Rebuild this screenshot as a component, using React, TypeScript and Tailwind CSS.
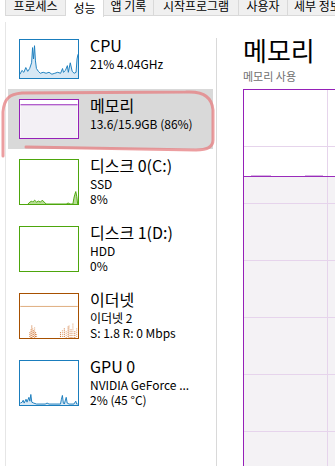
import React from 'react'

const font = { fontFamily: '"Noto Sans CJK KR", "Noto Sans", sans-serif' }

const tabs = [
  { label: '프로세스', w: 'w-[60px]', active: false },
  { label: '성능', w: 'w-[38px]', active: true },
  { label: '앱 기록', w: 'w-[50px]', active: false },
  { label: '시작프로그램', w: 'w-[85px]', active: false },
  { label: '사용자', w: 'w-[49px]', active: false },
  { label: '세부 정보', w: 'w-[60px]', active: false },
]

function CpuGraph() {
  const pts = '0,36 2,32 4,34 6,29 8,33 10,30 12,24 13,8 14,20 15,6 16,22 17,30 19,33 21,35 24,34 27,35 30,34 33,36 36,35 39,34 42,35 44,30 45,34 47,32 49,27 50,34 52,24 54,33 56,35 58,34 59,20 60,15'
  return (
    <svg width="60" height="40" className="block shrink-0 border border-[#1a7dbd] bg-white" viewBox="0 0 60 40" preserveAspectRatio="none">
      <polygon points={`0,40 ${pts} 60,40`} fill="#d7e8f5" />
      <polyline points={pts} fill="none" stroke="#1a7dbd" strokeWidth="1" />
    </svg>
  )
}

function MemGraph() {
  return (
    <svg width="60" height="40" className="block shrink-0 border border-[#9520b8] bg-white" viewBox="0 0 60 40">
      <rect x="0" y="5" width="60" height="35" fill="#f3f0f5" />
      <line x1="0" y1="5" x2="60" y2="5" stroke="#9520b8" strokeWidth="1" />
    </svg>
  )
}

function DiskGraph({ active }: { active: boolean }) {
  const pts = '8,46 10,44 12,43 13,44 15,42 17,44 19,43 21,44 23,42 25,44 27,46 48,46 50,45 52,46 55,46 56,40 57,36 58,33 59,38 60,46'
  return (
    <svg width="60" height="46" className="block shrink-0 border border-[#4da60c] bg-white" viewBox="0 0 60 46">
      {active && (
        <>
          <polygon points={pts} fill="#b7dd96" />
          <polyline points={pts} fill="none" stroke="#4da60c" strokeWidth="1" />
        </>
      )}
    </svg>
  )
}

function EthGraph() {
  const bars = [
    [10, 40], [11, 37], [12, 33], [13, 36], [14, 38], [15, 35], [16, 40], [17, 42],
    [42, 40], [44, 38], [46, 36], [48, 39], [50, 34], [51, 33], [53, 37], [55, 31], [57, 39], [59, 36],
  ]
  return (
    <svg width="60" height="46" className="block shrink-0 border border-[#a75000] bg-white" viewBox="0 0 60 46">
      <line x1="0" y1="13" x2="60" y2="13" stroke="#dca878" strokeWidth="1" />
      {bars.map(([x, y], i) => (
        <line key={i} x1={x} y1={y} x2={x} y2={46} stroke={i % 2 ? '#e09a66' : '#c8641e'} strokeWidth="1" strokeDasharray="1 1" />
      ))}
    </svg>
  )
}

function GpuGraph() {
  const pts = '0,44 2,43 3,41 4,44 6,40 7,43 9,38 10,42 11,35 12,43 14,44 17,45 26,45 28,44 30,45 42,45 43,40 44,36 45,44 46,45 48,38 49,44 51,45 56,45 58,42 59,45 60,45'
  return (
    <svg width="60" height="46" className="block shrink-0 border border-[#1a7dbd] bg-white" viewBox="0 0 60 46">
      <polygon points={`0,46 ${pts} 60,46`} fill="#d7e8f5" />
      <polyline points={pts} fill="none" stroke="#1a7dbd" strokeWidth="1" />
    </svg>
  )
}

type Item = { title: string; lines: string[]; graph: React.ReactNode; selected?: boolean }

const items: Array<Item> = [
  { title: 'CPU', lines: ['21% 4.04GHz'], graph: <CpuGraph /> },
  { title: '메모리', lines: ['13.6/15.9GB (86%)'], graph: <MemGraph />, selected: true },
  { title: '디스크 0(C:)', lines: ['SSD', '8%'], graph: <DiskGraph active /> },
  { title: '디스크 1(D:)', lines: ['HDD', '0%'], graph: <DiskGraph active={false} /> },
  { title: '이더넷', lines: ['이더넷 2', 'S: 1.8 R: 0 Mbps'], graph: <EthGraph /> },
  { title: 'GPU 0', lines: ['NVIDIA GeForce ...', '2% (45 °C)'], graph: <GpuGraph /> },
]

export default function App() {
  return (
    <div className="relative w-[335px] h-[466px] overflow-hidden bg-white text-black" style={font}>
      <div className="ml-[5px] flex h-[16px] bg-[#f0f0f0] border-l border-[#dadada]">
        {tabs.map((t) => (
          <div
            key={t.label}
            className={`${t.w} shrink-0 flex items-end justify-center overflow-hidden whitespace-nowrap text-[12px] leading-none pb-[3px] border-r border-[#d9d9d9] ${t.active ? 'bg-white h-[17px]' : 'border-b'}`}
          >
            {t.label}
          </div>
        ))}
      </div>
      <div className="flex h-[450px]">
        <div className="ml-[5px] mt-[6px] w-[211px] shrink-0 flex flex-col border-l border-[#e6e6e6] pt-[7px]">
          {items.map((it) => (
            <div
              key={it.title}
              className={`ml-[2px] mr-[3px] flex items-start gap-[11px] pl-[11px] py-[10px] ${it.selected ? 'bg-[#d9d9d9]' : ''}`}
            >
              {it.graph}
              <div className="flex flex-col whitespace-nowrap -mt-[4px]">
                <div className="text-[16px] leading-[21px]">{it.title}</div>
                {it.lines.map((l) => (
                  <div key={l} className="text-[12px] leading-[15px]">{l}</div>
                ))}
              </div>
            </div>
          ))}
        </div>
        <div className="mt-[22px] w-px shrink-0 bg-[#d9d9d9]" />
        <div className="flex-1 overflow-hidden pl-[26px] pt-[18px]">
          <div className="text-[26px] leading-[32px]">메모리</div>
          <div className="mt-[3px] text-[11px] leading-[15px] text-[#707070]">메모리 사용</div>
          <svg width="200" height="400" className="mt-[5px] block" viewBox="0 0 200 400">
            <rect x="0" y="0" width="200" height="400" fill="#ffffff" />
            <rect x="0" y="87" width="200" height="313" fill="#f4f2f5" />
            {[57, 114, 171, 228, 285, 342].map((y) => (
              <line key={y} x1="0" y1={y + 0.5} x2="200" y2={y + 0.5} stroke="#e6d4ec" strokeWidth="1" />
            ))}
            <line x1="84.5" y1="0" x2="84.5" y2="400" stroke="#e6d4ec" strokeWidth="1" />
            <line x1="0" y1="87.5" x2="200" y2="87.5" stroke="#9a2bbb" strokeWidth="1" />
            <line x1="8" y1="86.5" x2="28" y2="86.5" stroke="#d7b3e3" strokeWidth="1" />
            <line x1="62" y1="86.5" x2="80" y2="86.5" stroke="#d7b3e3" strokeWidth="1" />
            <rect x="0.5" y="0.5" width="220" height="420" fill="none" stroke="#9520b8" strokeWidth="1" />
          </svg>
        </div>
      </div>
      <svg className="pointer-events-none absolute left-0 top-0" width="335" height="466" viewBox="0 0 335 466">
        <path
          d="M 186 92 C 202 91 212 96 213 110 L 213 140 C 213 148 206 150 196 150 L 26 147 M 186 92 L 22 93 C 9 94 4 99 3 112 L 3 156"
          fill="none"
          stroke="#e67e80"
          strokeOpacity="0.75"
          strokeWidth="3"
          strokeLinecap="round"
        />
      </svg>
    </div>
  )
}
